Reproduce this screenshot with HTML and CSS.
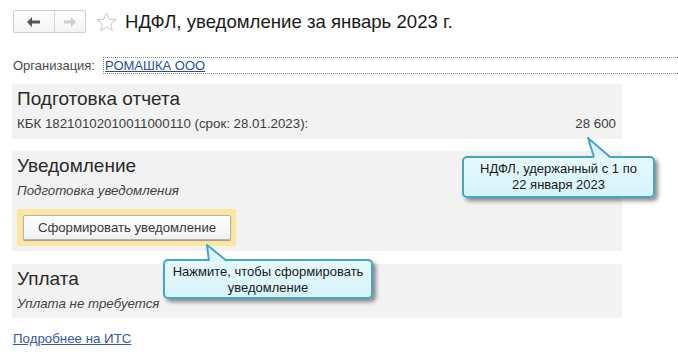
FILE: index.html
```
<!DOCTYPE html>
<html lang="ru">
<head>
    <meta charset="UTF-8">
    <title>НДФЛ, уведомление за январь 2023 г.</title>
    <link rel="stylesheet" href="styles.css">
</head>
<body>

    <div class="header">
        <div class="nav-group">
            <span class="nav-btn nav-back">
                <svg width="14" height="10" viewBox="0 0 14 10"><path d="M0 5 L5 0 L5 3.5 L13 3.5 L13 6.5 L5 6.5 L5 10 Z" fill="#555"/></svg>
            </span>
            <span class="nav-btn nav-forward">
                <svg width="12" height="10" viewBox="0 0 12 10"><path d="M12 5 L7 0 L7 3.5 L0 3.5 L0 6.5 L7 6.5 L7 10 Z" fill="#cfcfcf"/></svg>
            </span>
        </div>
        <svg class="star" width="21" height="20" viewBox="0 0 21 20">
            <path d="M10.5 1 L13.1 7.2 L19.8 7.6 L14.7 11.9 L16.3 18.5 L10.5 14.9 L4.7 18.5 L6.3 11.9 L1.2 7.6 L7.9 7.2 Z" fill="none" stroke="#c8c8c8" stroke-width="1"/>
        </svg>
        <h1 class="title">НДФЛ, уведомление за январь 2023 г.</h1>
    </div>

    <div class="org-row">
        <span class="org-label">Организация:</span>
        <div class="org-field"><a href="#" class="org-link">РОМАШКА ООО</a></div>
    </div>

    <div class="section section-report">
        <h2 class="section-title">Подготовка отчета</h2>
        <div class="kbk-row">
            <span>КБК 18210102010011000110 (срок: 28.01.2023):</span>
            <span>28 600</span>
        </div>
    </div>

    <div class="section section-notice">
        <h2 class="section-title">Уведомление</h2>
        <div class="note">Подготовка уведомления</div>
        <div class="highlight">
            <button class="action-btn">Сформировать уведомление</button>
        </div>
    </div>

    <div class="section section-pay">
        <h2 class="section-title">Уплата</h2>
        <div class="note">Уплата не требуется</div>
    </div>

    <a href="#" class="its-link">Подробнее на ИТС</a>

    <div class="callout callout-sum">
        <svg class="tail" width="26" height="23" viewBox="0 0 26 23">
            <polygon points="2,1 8,21 24,21" fill="#dcf5fb"/>
            <polyline points="8,20 2,1 24,20" fill="none" stroke="#46a6c2" stroke-width="2" stroke-linejoin="round"/>
        </svg>
        НДФЛ, удержанный с 1 по<br>22 января 2023
    </div>

    <div class="callout callout-btn">
        <svg class="tail" width="26" height="19" viewBox="0 0 26 19">
            <polygon points="2,1 4,18 22,18" fill="#dcf5fb"/>
            <polyline points="4,17 2,1 22,17" fill="none" stroke="#46a6c2" stroke-width="2" stroke-linejoin="round"/>
        </svg>
        Нажмите, чтобы сформировать<br>уведомление
    </div>

</body>
</html>
```

FILE: styles.css
```
body {
    margin: 0;
    font-family: "Liberation Sans", Arial, sans-serif;
    color: #333;
    background: #fff;
    position: relative;
    width: 678px;
    height: 364px;
    overflow: hidden;
}

.header {
    display: flex;
    align-items: center;
    padding: 10px 0 0 13px;
    height: 23px;
}

.nav-group {
    display: flex;
    height: 23px;
    border: 1px solid #cfcfcf;
    border-radius: 2px;
    box-sizing: border-box;
    background: linear-gradient(#ffffff, #f3f3f3);
}

    .nav-btn {
        display: flex;
        align-items: center;
        justify-content: center;
    }

    .nav-back {
        width: 40px;
        border-right: 1px solid #d6d6d6;
    }

    .nav-forward {
        width: 30px;
    }

.star {
    margin-left: 10px;
}

.title {
    margin: 0 0 0 8px;
    font-size: 18.6px;
    font-weight: normal;
    color: #1a1a1a;
    line-height: 23px;
}

.org-row {
    display: flex;
    align-items: center;
    margin-top: 24px;
    padding-left: 13px;
    height: 17px;
}

.org-label {
    width: 90px;
    font-size: 13px;
    color: #4a4a4a;
}

.org-field {
    flex: 1;
    height: 17px;
    box-sizing: border-box;
    border: 1px dotted #8a8a8a;
    border-right: none;
    padding-left: 1px;
    font-size: 13px;
    line-height: 15px;
}

.org-link {
    color: #27509f;
}

.section {
    width: 610px;
    margin-left: 12px;
    background: #f2f2f2;
    box-sizing: border-box;
    padding: 4px 6px 0 5px;
}

.section-report {
    margin-top: 10px;
    height: 55px;
}

.section-notice {
    margin-top: 12px;
    height: 100px;
}

.section-pay {
    margin-top: 13px;
    height: 54px;
}

.section-title {
    margin: 0;
    font-size: 19px;
    font-weight: normal;
    line-height: 22px;
    color: #2b2b2b;
}

.kbk-row {
    display: flex;
    justify-content: space-between;
    margin-top: 6px;
    font-size: 13.3px;
    line-height: 16px;
    color: #3d3d3d;
}

.note {
    margin-top: 6px;
    font-size: 13.3px;
    line-height: 16px;
    font-style: italic;
    color: #444;
}

.highlight {
    display: inline-block;
    margin-top: 10px;
    padding: 6px 5px 6px 6px;
    background: #fbe79f;
}

.action-btn {
    display: block;
    width: 208px;
    height: 25px;
    font-family: "Liberation Sans", Arial, sans-serif;
    font-size: 13.2px;
    color: #3a3a3a;
    background: linear-gradient(#ffffff, #f0f0f0);
    border: 1px solid #b4b4b4;
    border-radius: 2px;
    box-shadow: 0 1px 1px #9a9a9a;
    padding: 0;
}

.its-link {
    display: inline-block;
    margin: 13px 0 0 13px;
    font-size: 13.3px;
    line-height: 16px;
    color: #3259a8;
}

.callout {
    position: absolute;
    box-sizing: border-box;
    border: 2px solid #46a6c2;
    border-radius: 5px;
    background: linear-gradient(#e6f9fd, #d5f3fa);
    box-shadow: 3px 3px 4px rgba(0, 0, 0, 0.45);
    font-size: 13px;
    line-height: 16px;
    color: #1a1a1a;
    text-align: center;
    padding-top: 3px;
}

    .callout .tail {
        position: absolute;
    }

.callout-sum {
    left: 462px;
    top: 156px;
    width: 193px;
    height: 42px;
}

    .callout-sum .tail {
        left: 122px;
        top: -21px;
    }

.callout-btn {
    left: 163px;
    top: 259px;
    width: 210px;
    height: 40px;
}

    .callout-btn .tail {
        left: 40px;
        top: -17px;
    }
```
